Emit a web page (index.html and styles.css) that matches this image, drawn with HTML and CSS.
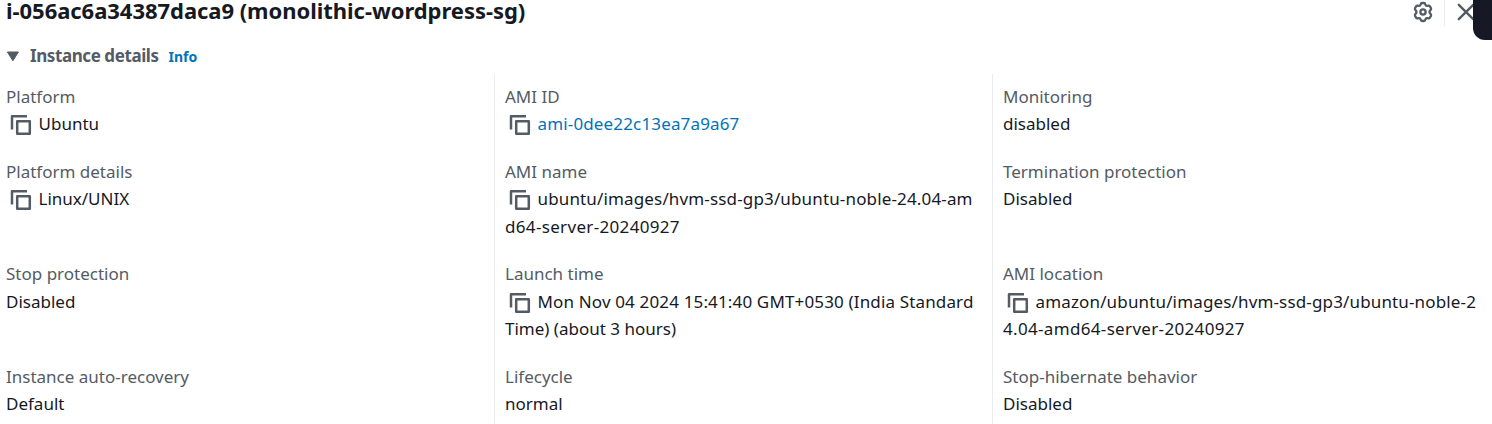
FILE: index.html
```html
<!DOCTYPE html>
<html lang="en">
<head>
<meta charset="utf-8">
<title>Instance details</title>
<link rel="stylesheet" href="styles.css">
</head>
<body>
<svg class="defs" aria-hidden="true"><symbol id="copy" viewBox="0 0 22 22"><path d="M2 15.5V2.2H17M7.2 7.2H19.8V19.8H7.2Z" fill="none" stroke="currentColor" stroke-width="2.5" stroke-linejoin="round"/></symbol></svg>
<div class="panel">
  <header class="panel-header">
    <h1 class="title">i-056ac6a34387daca9 (monolithic-wordpress-sg)</h1>
    <div class="actions">
      <svg class="gear" viewBox="0 0 22 22" fill="none" stroke="currentColor" stroke-width="2.3" stroke-linejoin="round"><path d="M8.6 3.4Q8.9 2 10.2 2H11.8Q13.1 2 13.4 3.4Q13.8 5.2 15.7 4.8Q17.2 4.3 17.9 5.3L18.9 7Q19.5 8.2 18.5 9.1Q16.6 11 18.5 12.9Q19.5 13.8 18.9 15L17.9 16.7Q17.2 17.7 15.7 17.2Q13.8 16.8 13.4 18.6Q13.1 20 11.8 20H10.2Q8.9 20 8.6 18.6Q8.2 16.8 6.3 17.2Q4.8 17.7 4.1 16.7L3.1 15Q2.5 13.8 3.5 12.9Q5.4 11 3.5 9.1Q2.5 8.2 3.1 7L4.1 5.3Q4.8 4.3 6.3 4.8Q8.2 5.2 8.6 3.4Z"/><circle cx="11" cy="11" r="2.6"/></svg>
      <span class="divider"></span>
      <svg class="close" viewBox="0 0 18 18"><path d="M1.8 1.8L16.2 16.2M16.2 1.8L1.8 16.2" fill="none" stroke="currentColor" stroke-width="2.4" stroke-linecap="round"/></svg>
    </div>
  </header>
  <div class="section-header"><svg class="caret" viewBox="0 0 14 11"><path d="M1.4 1H12.4L6.9 9.8Z" fill="currentColor" stroke="currentColor" stroke-linejoin="round"/></svg><h2 class="section-title">Instance details</h2><a class="info">Info</a></div>
  <div class="details">
    <div class="cell"><div class="label">Platform</div><div class="value"><svg class="copy"><use href="#copy"/></svg>Ubuntu</div></div>
    <div class="cell"><div class="label">AMI ID</div><div class="value"><svg class="copy"><use href="#copy"/></svg><a class="link path">ami-0dee22c13ea7a9a67</a></div></div>
    <div class="cell"><div class="label">Monitoring</div><div class="value">disabled</div></div>
    <div class="cell"><div class="label">Platform details</div><div class="value"><svg class="copy"><use href="#copy"/></svg>Linux/UNIX</div></div>
    <div class="cell"><div class="label">AMI name</div><div class="value"><svg class="copy"><use href="#copy"/></svg><span class="path">ubuntu/images/hvm-ssd-gp3/ubuntu-noble-24.04-am</span><br><span class="numeric">d64-server-20240927</span></div></div>
    <div class="cell"><div class="label">Termination protection</div><div class="value">Disabled</div></div>
    <div class="cell"><div class="label">Stop protection</div><div class="value">Disabled</div></div>
    <div class="cell"><div class="label">Launch time</div><div class="value"><svg class="copy"><use href="#copy"/></svg><span class="path">Mon Nov 04 2024 15:41:40 GMT+0530 (India Standard</span><br>Time) (about 3 hours)</div></div>
    <div class="cell"><div class="label">AMI location</div><div class="value"><svg class="copy"><use href="#copy"/></svg><span class="path">amazon/ubuntu/images/hvm-ssd-gp3/ubuntu-noble-2</span><br><span class="numeric">4.04-amd64-server-20240927</span></div></div>
    <div class="cell"><div class="label">Instance auto-recovery</div><div class="value">Default</div></div>
    <div class="cell"><div class="label">Lifecycle</div><div class="value">normal</div></div>
    <div class="cell"><div class="label">Stop-hibernate behavior</div><div class="value">Disabled</div></div>
  </div>
  <div class="corner"></div>
</div>
</body>
</html>
```
FILE: styles.css
```css
* { box-sizing: border-box; }
body { margin: 0; background: #fff; color: #16191f; font-family: "Noto Sans", sans-serif; font-size: 17px; line-height: 27.4px; }
.defs { position: absolute; width: 0; height: 0; }
.panel { position: relative; height: 424px; overflow: hidden; }
.panel-header { display: flex; justify-content: space-between; height: 38px; padding-left: 6px; }
.title { margin: 0; font-size: 22px; line-height: 21px; font-weight: 700; letter-spacing: -.04px; white-space: nowrap; }
.actions { display: flex; height: 26px; align-items: flex-start; color: #545b64; }
.gear { width: 22px; height: 22px; margin: 1px 10px 0 0; }
.divider { width: 1px; height: 26px; background: #eaeded; }
.close { width: 18px; height: 18px; margin: 3px 17px 0 12px; }
.section-header { display: flex; height: 36px; padding-left: 6px; align-items: flex-start; color: #545b64; }
.caret { width: 14px; height: 11px; margin: 13px 10px 0 0; }
.section-title { margin: 4px 10px 0 0; font-size: 17px; font-weight: 700; letter-spacing: -.42px; }
.info { margin-top: 5px; color: #0073bb; font-size: 14px; font-weight: 700; }
.details { display: grid; grid-template-columns: 494px 498px 500px; white-space: nowrap; }
.cell { padding: 0 0 20px 10px; border-left: 1px solid #eaeded; }
.cell:nth-child(3n+1) { padding-left: 6px; border-left: 0; }
.cell:nth-child(-n+3) { padding-top: 9.4px; padding-bottom: 20.6px; }
.cell:nth-child(-n+6) .label { height: 26.2px; }
.cell:nth-child(-n+6) .value { line-height: 28px; }
.cell:nth-child(n+4):nth-child(-n+6) { padding-bottom: 19.4px; }
.cell:nth-child(n+4):nth-child(-n+6) .label { height: 26.8px; }
.label { color: #545b64; }
.copy { width: 22px; height: 22px; margin: 0 6.5px 0 4px; color: #545b64; vertical-align: -6px; }
.path { letter-spacing: .15px; }
.numeric { letter-spacing: .33px; }
.link { color: #0073bb; }
.corner { position: absolute; top: -10px; right: -20px; width: 39px; height: 50px; border-radius: 0 0 0 12px; background: #161925; }
```
